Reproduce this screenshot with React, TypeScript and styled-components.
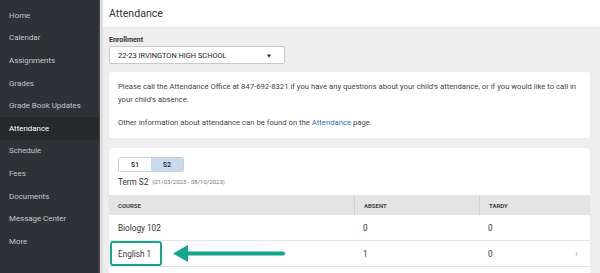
import React from "react";
import styled, { createGlobalStyle } from "styled-components";

// --- 전역 스타일 ---

const GlobalStyle = createGlobalStyle`
  html, body {
    margin: 0;
    padding: 0;
    width: 600px;
    height: 273px;
    overflow: hidden;
    background: #eeeeee;
    font-family: Roboto, "Liberation Sans", Arial, sans-serif;
  }
`;

// --- 레이아웃 ---

const Page = styled.div`
  display: flex;
  width: 600px;
  height: 273px;
  overflow: hidden;
`;

const Sidebar = styled.nav`
  width: 99px;
  flex-shrink: 0;
  background: #2e3236;
  padding-top: 4px;
  border-right: 1px solid #4a4e52;
`;

const NavItem = styled.div<{ $active?: boolean }>`
  height: 22.6px;
  display: flex;
  align-items: center;
  padding-left: 9px;
  font-size: 7.9px;
  color: ${(p) => (p.$active ? "#ffffff" : "#c4c6c8")};
  background: ${(p) => (p.$active ? "#26292c" : "transparent")};
`;

const Main = styled.main`
  flex: 1;
  display: flex;
  flex-direction: column;
  border-left: 3px solid #dcdcdc;
  background: #eeeeee;
`;

const Header = styled.header`
  height: 27px;
  flex-shrink: 0;
  background: #ffffff;
  border-bottom: 1px solid #e2e2e2;
  display: flex;
  align-items: center;
  padding-left: 6px;
  font-size: 10.6px;
  color: #333;
`;

const Content = styled.div`
  padding: 8px 10px 0 6px;
  display: flex;
  flex-direction: column;
`;

const Label = styled.div`
  font-size: 7px;
  font-weight: 700;
  color: #333;
  margin-bottom: 2px;
`;

const SelectBox = styled.div`
  width: 176px;
  height: 18px;
  box-sizing: border-box;
  background: #fff;
  border: 1px solid #c9c9c9;
  border-radius: 2px;
  display: flex;
  align-items: center;
  justify-content: space-between;
  padding: 0 12px 0 8px;
  font-size: 7.4px;
  color: #222;
  margin-bottom: 8px;

  span:last-child {
    font-size: 6px;
  }
`;

const Card = styled.div`
  background: #fff;
  border-radius: 2px;
  box-shadow: 0 0 1px rgba(0, 0, 0, 0.15);
`;

const InfoCard = styled(Card)`
  padding: 8px 4px 9px 9px;
  font-size: 7.7px;
  line-height: 13px;
  color: #444;
  margin-bottom: 10px;

  p {
    margin: 0;
  }
  p + p {
    margin-top: 10px;
  }
  a {
    color: #2a6ebb;
    text-decoration: none;
  }
`;

const TermCard = styled(Card)`
  padding-top: 9px;
  height: 140px;
`;

const TermTop = styled.div`
  display: flex;
  flex-direction: column;
  align-items: flex-start;
  padding: 0 9px;
`;

const Toggle = styled.div`
  display: flex;
  height: 15px;
  box-sizing: border-box;
  border: 1px solid #cfcfcf;
  border-radius: 2px;
  overflow: hidden;
`;

const ToggleButton = styled.div<{ $selected?: boolean }>`
  width: 32px;
  display: flex;
  align-items: center;
  justify-content: center;
  font-size: 6.6px;
  font-weight: 700;
  color: #333;
  background: ${(p) => (p.$selected ? "#c6dbef" : "#ffffff")};
`;

const TermLine = styled.div`
  margin-top: 1px;
  height: 17px;
  display: flex;
  align-items: center;
  font-size: 8.2px;
  color: #333;

  small {
    font-size: 6px;
    color: #777;
    margin-left: 4px;
  }
`;

const Table = styled.div`
  margin-top: 5px;
`;

const Row = styled.div<{ $head?: boolean }>`
  display: grid;
  grid-template-columns: 245px 125px 1fr;
  height: ${(p) => (p.$head ? "20px" : "25px")};
  background: ${(p) => (p.$head ? "#e4e4e4" : "#fff")};
  border-bottom: ${(p) => (p.$head ? "none" : "1px solid #e4e4e4")};
`;

const Cell = styled.div<{ $head?: boolean; $divider?: boolean }>`
  position: relative;
  display: flex;
  align-items: center;
  justify-content: space-between;
  padding: 0 12px 0 9px;
  font-size: ${(p) => (p.$head ? "6px" : "8.2px")};
  font-weight: ${(p) => (p.$head ? 700 : 400)};
  color: ${(p) => (p.$head ? "#444" : "#333")};
  border-left: ${(p) => (p.$divider ? "1px solid #d2d2d2" : "none")};
`;

const Chevron = styled.span`
  color: #b0b0b0;
  font-size: 10px;
`;

// 강조 표시 (녹색 박스 + 화살표)
const Highlight = styled.div`
  position: absolute;
  left: 1px;
  top: 0;
  width: 52px;
  height: 25px;
  box-sizing: border-box;
  border: 2px solid #14a68b;
  border-radius: 3px;
`;

const Arrow = styled.svg`
  position: absolute;
  left: 64px;
  top: 3px;
`;

const navItems = [
  "Home",
  "Calendar",
  "Assignments",
  "Grades",
  "Grade Book Updates",
  "Attendance",
  "Schedule",
  "Fees",
  "Documents",
  "Message Center",
  "More",
];

const rows = [
  { course: "Biology 102", absent: "0", tardy: "0", marked: false },
  { course: "English 1", absent: "1", tardy: "0", marked: true },
];

export default function App() {
  return (
    <>
      <GlobalStyle />
      <Page>
        <Sidebar>
          {navItems.map((item) => (
            <NavItem key={item} $active={item === "Attendance"}>
              {item}
            </NavItem>
          ))}
        </Sidebar>
        <Main>
          <Header>Attendance</Header>
          <Content>
            <Label>Enrollment</Label>
            <SelectBox>
              <span>22-23 IRVINGTON HIGH SCHOOL</span>
              <span>▼</span>
            </SelectBox>
            <InfoCard>
              <p>
                Please call the Attendance Office at 847-692-8321 if you have
                any questions about your child's attendance, or if you would
                like to call in your child's absence.
              </p>
              <p>
                Other information about attendance can be found on the{" "}
                <a href="#">Attendance</a> page.
              </p>
            </InfoCard>
            <TermCard>
              <TermTop>
                <Toggle>
                  <ToggleButton>S1</ToggleButton>
                  <ToggleButton $selected>S2</ToggleButton>
                </Toggle>
                <TermLine>
                  Term S2 <small>(01/03/2023 - 08/10/2023)</small>
                </TermLine>
              </TermTop>
              <Table>
                <Row $head>
                  <Cell $head>COURSE</Cell>
                  <Cell $head $divider>ABSENT</Cell>
                  <Cell $head $divider>TARDY</Cell>
                </Row>
                {rows.map((r) => (
                  <Row key={r.course}>
                    <Cell>
                      {r.course}
                      {r.marked && (
                        <>
                          <Highlight />
                          <Arrow width="114" height="19" viewBox="0 0 114 19">
                            <line
                              x1="12"
                              y1="9.5"
                              x2="110"
                              y2="9.5"
                              stroke="#14a68b"
                              strokeWidth="4"
                              strokeLinecap="round"
                            />
                            <polygon points="0,9.5 15,1 15,18" fill="#14a68b" />
                          </Arrow>
                        </>
                      )}
                    </Cell>
                    <Cell>{r.absent}</Cell>
                    <Cell>
                      <span>{r.tardy}</span>
                      {r.marked && <Chevron>›</Chevron>}
                    </Cell>
                  </Row>
                ))}
              </Table>
            </TermCard>
          </Content>
        </Main>
      </Page>
    </>
  );
}
